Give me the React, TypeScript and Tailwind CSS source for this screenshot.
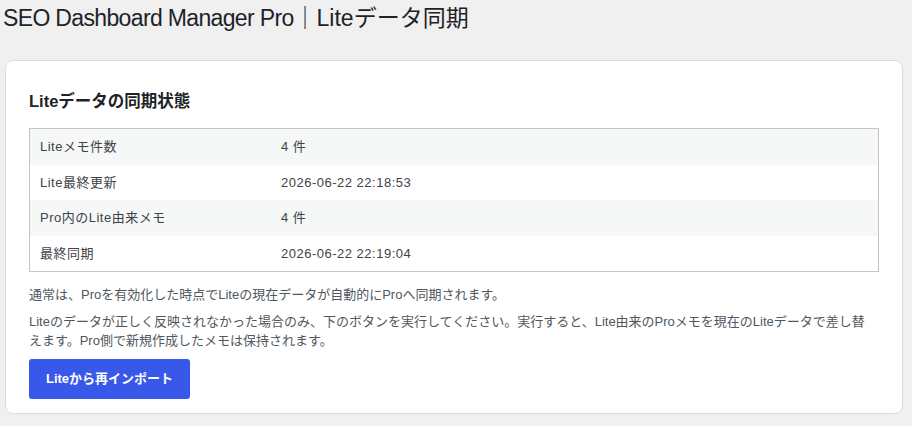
const rows = [
  { label: 'Liteメモ件数', value: '4 件' },
  { label: 'Lite最終更新', value: '2026-06-22 22:18:53' },
  { label: 'Pro内のLite由来メモ', value: '4 件' },
  { label: '最終同期', value: '2026-06-22 22:19:04' },
];

export default function App() {
  return (
    <div
      className="min-h-screen bg-[#f0f0f1] pl-[5px] pr-[9px] text-[#3c434a]"
      style={{ fontFamily: '"Liberation Sans", "Noto Sans CJK JP", sans-serif' }}
    >
      <h1 className="-ml-[2px] pt-[3px] text-[23px] leading-[30px] font-normal text-[#1d2327]">
        <span className="tracking-[-0.65px]">SEO Dashboard Manager Pro</span>｜Liteデータ同期
      </h1>

      <div className="mt-[27px] rounded-lg border border-[#dcdcde] bg-white px-[23px] pt-[28px] pb-[14px]">
        <h2 className="mb-[15px] text-[16.5px] leading-6 font-semibold text-[#1d2327]">Liteデータの同期状態</h2>

        <div className="border border-[#c3c4c7]">
          {rows.map((row, i) => (
            <div
              key={row.label}
              className={`flex h-[35.5px] items-center text-[13px] tracking-[0.5px] ${i % 2 === 0 ? 'bg-[#f6f7f7]' : 'bg-white'}`}
            >
              <div className="w-[251px] pl-[10px]">{row.label}</div>
              <div>{row.value}</div>
            </div>
          ))}
        </div>

        <p className="mt-[13px] text-[13px] leading-[19.5px] text-[#50575e]">
          通常は、Proを有効化した時点でLiteの現在データが自動的にProへ同期されます。
        </p>
        <p className="mt-[7px] text-[13px] leading-[19.5px] text-[#50575e]">
          Liteのデータが正しく反映されなかった場合のみ、下のボタンを実行してください。実行すると、Lite由来のProメモを現在のLiteデータで差し替
          <br />
          えます。Pro側で新規作成したメモは保持されます。
        </p>

        <button
          type="button"
          className="mt-[8px] flex h-10 w-[161px] items-center justify-center rounded-[3px] bg-[#3858e9] text-[13px] font-semibold text-white"
        >
          Liteから再インポート
        </button>
      </div>
    </div>
  );
}
